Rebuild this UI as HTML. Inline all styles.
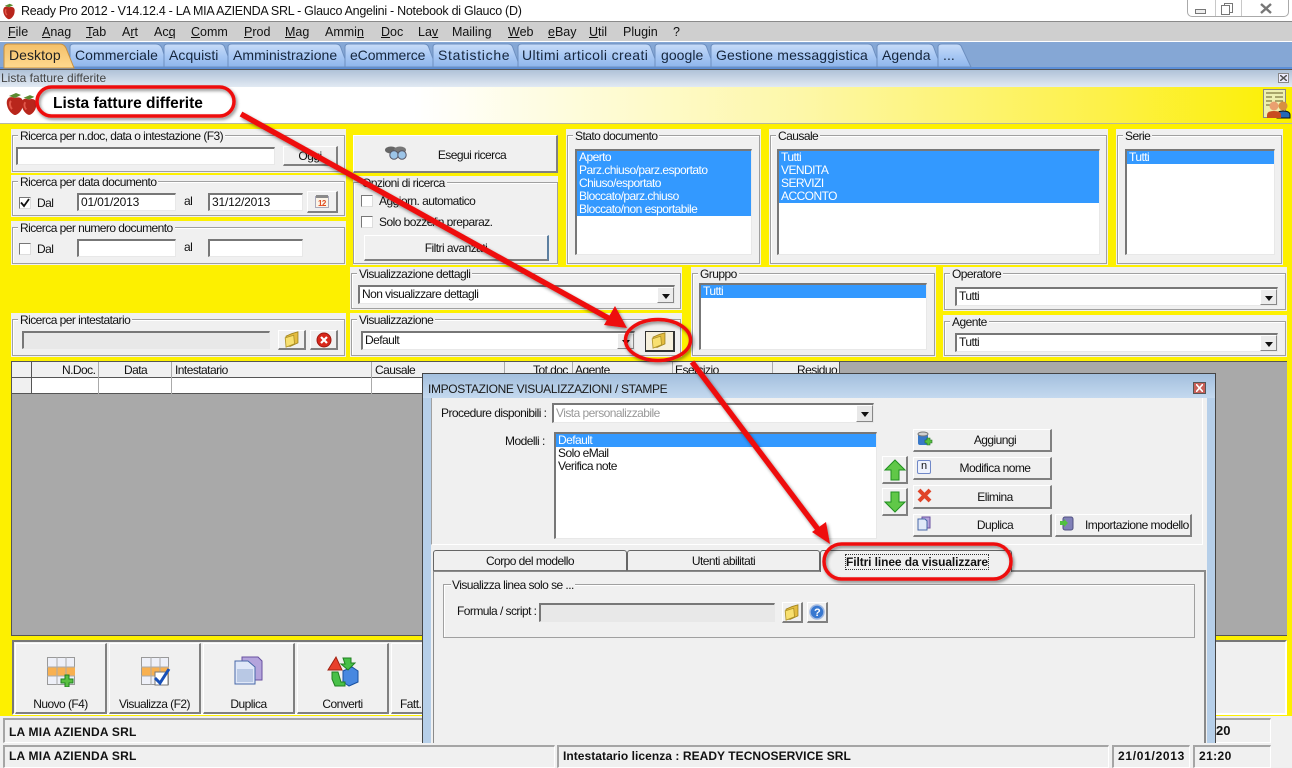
<!DOCTYPE html>
<html><head><meta charset="utf-8"><style>
html,body{margin:0;padding:0}
body{width:1292px;height:768px;overflow:hidden;position:relative;background:#f0f0f0;font:12px/14px "Liberation Sans",Arial,sans-serif;color:#111;letter-spacing:-.55px}
div,span,svg{position:absolute;box-sizing:border-box}
span{white-space:nowrap}
u{text-decoration:underline}
.m{top:25px;font-size:12.5px;letter-spacing:0}
.tt{top:48px;font-size:14px;color:#16263c;letter-spacing:.05px}
.p{background:#f0f0f0}
.g{left:1px;right:1px;top:6px;bottom:1px;border:1px solid #a0a0a0;box-shadow:inset 1px 1px 0 #fff}
.l{top:0;left:7px;background:#f0f0f0;padding:0 2px;font-size:12px}
.i{background:#fff;border:1px solid #9c9c9c;border-top:2px solid #777;border-left:2px solid #777;border-right-color:#e8e8e8;border-bottom-color:#e8e8e8;white-space:nowrap}
.b{background:#f0f0f0;border:1px solid #fff;border-right:2px solid #808080;border-bottom:2px solid #808080;text-align:center;white-space:nowrap}
.c{width:12px;height:12px;background:#fff;border:1px solid #777;border-right-color:#ddd;border-bottom-color:#ddd}
.s{background:#3399ff;color:#fff;left:0;right:0;height:13px;line-height:13px;padding-left:2px;font-size:12px}
.r{left:0;right:0;height:13px;line-height:13px;padding-left:2px;font-size:12px;color:#111}
.a{right:0;top:0;bottom:0;width:17px;background:#ececec;border:1px solid #fff;border-right:1px solid #888;border-bottom:1px solid #888}
.a:after{content:"";position:absolute;left:4px;top:6px;border:4px solid transparent;border-top:5px solid #111;border-bottom:0}
.st{background:#f0f0f0;border:1px solid #fff;border-top:2px solid #a5a5a5;border-left:2px solid #a5a5a5;font-weight:bold;font-size:12px;line-height:19px;padding-left:4px;letter-spacing:.22px;white-space:nowrap}
</style></head><body>
<svg width="0" height="0" style="position:absolute"><defs>
<symbol id="fo" viewBox="0 0 20 20"><path d="M3 6 L10 3 L17 1 L17 14 L8 18 L3 18Z" fill="#e4bc40" stroke="#a08420"/><path d="M2 8 L12 5 L13 15 L3 19Z" fill="#f8e070" stroke="#b09428"/></symbol>
<symbol id="sb" viewBox="0 0 20 24"><path d="M10 6 C3 3 1 8 2 13 C3 19 8 23 10 23 C13 23 18 18 18 12 C19 7 15 4 10 6Z" fill="#b8261c"/><path d="M6 9 C4 11 5 15 7 17" stroke="#e2584a" fill="none" stroke-width="2"/><path d="M4 4 L10 6 L16 3 L11 1Z" fill="#5a8a30"/></symbol>
</defs></svg>

<!-- title bar -->
<div style="left:0;top:0;width:1292px;height:22px;background:#fff;border-bottom:1px solid #8a8a8a"></div>
<svg style="left:2px;top:3px" width="14" height="17"><use href="#sb" width="14" height="17"/></svg>
<span style="left:21px;top:4px;font-size:12.5px;letter-spacing:-.28px">Ready Pro 2012 - V14.12.4 - LA MIA AZIENDA SRL - Glauco Angelini - Notebook di Glauco (D)</span>
<div style="left:1187px;top:-3px;width:102px;height:20px;background:#fff;border:1px solid #aaa;border-radius:0 0 5px 5px"></div>
<div style="left:1215px;top:0;width:1px;height:16px;background:#c8c8c8"></div>
<div style="left:1241px;top:0;width:1px;height:16px;background:#c8c8c8"></div>
<div style="left:1195px;top:9px;width:11px;height:5px;border:1px solid #777;background:#eee"></div>
<div style="left:1224px;top:3px;width:9px;height:10px;border:1.5px solid #777"></div><div style="left:1221px;top:5px;width:9px;height:10px;border:1.5px solid #777;background:#fff"></div>
<svg style="left:1260px;top:3px" width="12" height="11"><path d="M1 1L11 10M11 1L1 10" stroke="#777" stroke-width="2.4"/></svg>

<!-- menu -->
<div style="left:0;top:22px;width:1292px;height:19px;background:#cfcfcf"></div>
<div style="left:0;top:41px;width:1292px;height:1px;background:#fff"></div>
<span class="m" style="left:8px"><u>F</u>ile</span><span class="m" style="left:42px"><u>A</u>nag</span><span class="m" style="left:86px"><u>T</u>ab</span><span class="m" style="left:122px">A<u>r</u>t</span><span class="m" style="left:154px">Ac<u>q</u></span><span class="m" style="left:191px"><u>C</u>omm</span><span class="m" style="left:244px"><u>P</u>rod</span><span class="m" style="left:285px"><u>M</u>ag</span><span class="m" style="left:325px">Ammi<u>n</u></span><span class="m" style="left:381px"><u>D</u>oc</span><span class="m" style="left:418px">La<u>v</u></span><span class="m" style="left:452px">Mailin<u>g</u></span><span class="m" style="left:508px"><u>W</u>eb</span><span class="m" style="left:548px"><u>e</u>Bay</span><span class="m" style="left:589px"><u>U</u>til</span><span class="m" style="left:623px">Plu<u>g</u>in</span><span class="m" style="left:673px">?</span>

<!-- tabs -->
<div style="left:0;top:42px;width:1292px;height:25px;background:#85a7d5"></div>
<div style="left:0;top:67px;width:1292px;height:2px;background:#5c8fd8"></div>
<div style="left:0;top:69px;width:1292px;height:1px;background:#555"></div>
<svg style="left:0;top:42px" width="1000" height="27">
<defs><linearGradient id="tb" x1="0" y1="0" x2="0" y2="1"><stop offset="0" stop-color="#c8dcf8"/><stop offset=".5" stop-color="#a8c8f4"/><stop offset="1" stop-color="#8fb6ec"/></linearGradient>
<linearGradient id="to" x1="0" y1="0" x2="0" y2="1"><stop offset="0" stop-color="#f4c06a"/><stop offset="1" stop-color="#fdd88e"/></linearGradient></defs>
<g fill="url(#tb)" stroke="#6d8fc0">
<path d="M70 25V5Q70 2 74 2H156Q160 2 162 6L168 25Z"/>
<path d="M164 25V5Q164 2 168 2H220Q224 2 225 6L232 25Z"/>
<path d="M228 25V5Q228 2 232 2H336Q340 2 341 6L348 25Z"/>
<path d="M345 25V5Q345 2 349 2H424Q428 2 429 6L436 25Z"/>
<path d="M433 25V5Q433 2 437 2H508Q512 2 513 6L520 25Z"/>
<path d="M518 25V5Q518 2 522 2H646Q650 2 651 6L658 25Z"/>
<path d="M655 25V5Q655 2 659 2H702Q706 2 707 6L714 25Z"/>
<path d="M711 25V5Q711 2 715 2H868Q872 2 873 6L880 25Z"/>
<path d="M877 25V5Q877 2 881 2H929Q933 2 934 6L941 25Z"/>
<path d="M938 25V5Q938 2 942 2H957Q961 2 962 6L971 25Z"/>
</g>
<path d="M4 26V6Q4 2 8 2H60Q64 2 66 6L74 26Z" fill="url(#to)" stroke="#c89040"/>
</svg>
<span class="tt" style="left:9px;color:#222">Desktop</span><span class="tt" style="left:75px">Commerciale</span><span class="tt" style="left:169px">Acquisti</span><span class="tt" style="left:233px">Amministrazione</span><span class="tt" style="left:350px;letter-spacing:-.1px">eCommerce</span><span class="tt" style="left:438px;letter-spacing:.7px">Statistiche</span><span class="tt" style="left:522px;letter-spacing:.4px">Ultimi articoli creati</span><span class="tt" style="left:661px">google</span><span class="tt" style="left:716px;letter-spacing:.15px">Gestione messaggistica</span><span class="tt" style="left:882px">Agenda</span><span class="tt" style="left:943px">...</span>

<!-- subtitle -->
<div style="left:0;top:70px;width:1292px;height:17px;background:linear-gradient(#b0c2d8,#e2eaf3)"></div>
<span style="left:1px;top:71px;font-size:12px;letter-spacing:0;color:#444">Lista fatture differite</span>
<div style="left:1278px;top:73px;width:11px;height:10px;border:1px solid #888;background:#eef"></div>
<svg style="left:1280px;top:75px" width="7" height="6"><path d="M0 0L7 6M7 0L0 6" stroke="#555" stroke-width="1.5"/></svg>

<!-- header -->
<div style="left:0;top:87px;width:1292px;height:36px;background:linear-gradient(90deg,#fff 0,#fff 32%,#fdf7a8 62%,#fdf14a 85%,#fcf000 100%)"></div>
<div style="left:0;top:123px;width:1292px;height:1px;background:#b8b8a0"></div>
<svg style="left:5px;top:92px" width="20" height="24"><use href="#sb" width="20" height="24"/></svg>
<svg style="left:20px;top:94px" width="18" height="22"><use href="#sb" width="18" height="22"/></svg>
<span style="left:53px;top:95px;font-size:15.5px;line-height:17px;font-weight:bold;color:#000;letter-spacing:0">Lista fatture differite</span>
<svg style="left:1263px;top:89px" width="28" height="31"><rect x=".5" y=".5" width="22" height="28" fill="#eef0b0" stroke="#888"/><path d="M3 4H20M3 8H9M3 12H9M3 16H8M12 8H20M12 12H20" stroke="#807a40" stroke-width="1.3"/><circle cx="20" cy="17" r="4.5" fill="#d89040"/><path d="M14 29V26Q14 22 20 22Q27 22 27 26V29Z" fill="#2468b8" stroke="#111"/><circle cx="11" cy="17" r="4.5" fill="#eaa070"/><path d="M4 29V26Q4 22 11 22Q18 22 18 26V29Z" fill="#c84c20"/></svg>

<!-- yellow -->
<div style="left:0;top:124px;width:1292px;height:592px;background:#fdf000"></div>

<!-- left panels -->
<div class="p" style="left:11px;top:129px;width:335px;height:44px"><div class="g"></div><span class="l">Ricerca per n.doc, data o intestazione (F3)</span></div>
<div class="i" style="left:16px;top:147px;width:259px;height:18px"></div>
<div class="b" style="left:283px;top:146px;width:55px;height:20px;line-height:18px">Oggi</div>

<div class="p" style="left:11px;top:175px;width:335px;height:42px"><div class="g"></div><span class="l">Ricerca per data documento</span></div>
<div class="c" style="left:19px;top:197px"></div>
<svg style="left:20px;top:198px" width="10" height="10"><path d="M1 4.5L4 8L9 1" stroke="#111" stroke-width="1.8" fill="none"/></svg>
<span style="left:37px;top:196px">Dal</span>
<div class="i" style="left:77px;top:193px;width:99px;height:18px;line-height:14px;padding-left:2px;letter-spacing:-.2px">01/01/2013</div>
<span style="left:184px;top:194px">al</span>
<div class="i" style="left:208px;top:193px;width:95px;height:18px;line-height:14px;padding-left:2px;letter-spacing:-.2px">31/12/2013</div>
<div class="b" style="left:307px;top:191px;width:31px;height:22px"></div>
<svg style="left:315px;top:194px" width="15" height="15"><rect x=".5" y="2.5" width="13" height="11" fill="#fbf4e8" stroke="#aab"/><rect x="1" y="1" width="12" height="3" fill="#8a8a8a"/><text x="3" y="12" font-size="8" font-weight="bold" fill="#e04a20" font-family="Liberation Sans">12</text></svg>

<div class="p" style="left:11px;top:221px;width:335px;height:44px"><div class="g"></div><span class="l">Ricerca per numero documento</span></div>
<div class="c" style="left:19px;top:243px"></div>
<span style="left:37px;top:242px">Dal</span>
<div class="i" style="left:77px;top:239px;width:99px;height:18px"></div>
<span style="left:184px;top:240px">al</span>
<div class="i" style="left:208px;top:239px;width:95px;height:18px"></div>

<div class="p" style="left:11px;top:313px;width:335px;height:44px"><div class="g"></div><span class="l">Ricerca per intestatario</span></div>
<div class="i" style="left:22px;top:331px;width:248px;height:18px;background:#e8e8e8"></div>
<div class="b" style="left:278px;top:330px;width:28px;height:20px"></div>
<svg style="left:283px;top:331px" width="18" height="17"><use href="#fo" width="18" height="17"/></svg>
<div class="b" style="left:310px;top:330px;width:28px;height:20px"></div>
<svg style="left:316px;top:332px" width="16" height="16"><circle cx="8" cy="8" r="7" fill="#d8281c" stroke="#a01810"/><path d="M5 5L11 11M11 5L5 11" stroke="#fff" stroke-width="2.2"/></svg>

<!-- center panels -->
<div class="b" style="left:353px;top:135px;width:205px;height:38px;line-height:38px;padding-left:34px">Esegui ricerca</div>
<svg style="left:384px;top:145px" width="24" height="16"><ellipse cx="7" cy="5" rx="6" ry="3.5" fill="#666"/><ellipse cx="16" cy="5" rx="6" ry="3.5" fill="#777"/><circle cx="10" cy="10" r="4.2" fill="#9cc4e8" stroke="#556"/><circle cx="18" cy="10" r="4.2" fill="#9cc4e8" stroke="#556"/></svg>

<div class="p" style="left:353px;top:176px;width:205px;height:89px"><div class="g" style="left:0;right:0"></div><span class="l">Opzioni di ricerca</span></div>
<div class="c" style="left:361px;top:195px"></div><span style="left:379px;top:194px">Aggiorn. automatico</span>
<div class="c" style="left:361px;top:216px"></div><span style="left:379px;top:215px">Solo bozze/in preparaz.</span>
<div class="b" style="left:364px;top:235px;width:185px;height:26px;line-height:24px;border-right-color:#5c7fa0">Filtri avanzati</div>

<div class="p" style="left:350px;top:267px;width:332px;height:43px"><div class="g"></div><span class="l">Visualizzazione dettagli</span></div>
<div class="i" style="left:358px;top:285px;width:317px;height:19px;line-height:15px;padding-left:2px">Non visualizzare dettagli<div class="a"></div></div>

<div class="p" style="left:350px;top:313px;width:332px;height:44px"><div class="g"></div><span class="l">Visualizzazione</span></div>
<div class="i" style="left:361px;top:331px;width:274px;height:19px;line-height:15px;padding-left:2px">Default<div class="a"></div></div>
<div class="b" style="left:645px;top:331px;width:30px;height:21px;border:1px solid #333;border-right:2px solid #333;border-bottom:2px solid #333;background:#f6f0dc"></div>
<svg style="left:650px;top:332px" width="18" height="17"><use href="#fo" width="18" height="17"/></svg>

<!-- lists -->
<div class="p" style="left:566px;top:129px;width:195px;height:136px"><div class="g"></div><span class="l">Stato documento</span></div>
<div class="i" style="left:575px;top:149px;width:177px;height:106px"><div class="s" style="top:0">Aperto</div><div class="s" style="top:13px">Parz.chiuso/parz.esportato</div><div class="s" style="top:26px">Chiuso/esportato</div><div class="s" style="top:39px">Bloccato/parz.chiuso</div><div class="s" style="top:52px">Bloccato/non esportabile</div></div>

<div class="p" style="left:769px;top:129px;width:339px;height:136px"><div class="g"></div><span class="l">Causale</span></div>
<div class="i" style="left:777px;top:149px;width:323px;height:106px"><div class="s" style="top:0">Tutti</div><div class="s" style="top:13px">VENDITA</div><div class="s" style="top:26px">SERVIZI</div><div class="s" style="top:39px">ACCONTO</div></div>

<div class="p" style="left:1116px;top:129px;width:167px;height:136px"><div class="g"></div><span class="l">Serie</span></div>
<div class="i" style="left:1125px;top:149px;width:150px;height:106px"><div class="s" style="top:0">Tutti</div></div>

<div class="p" style="left:691px;top:267px;width:245px;height:90px"><div class="g"></div><span class="l">Gruppo</span></div>
<div class="i" style="left:699px;top:283px;width:228px;height:67px"><div class="s" style="top:0">Tutti</div></div>

<div class="p" style="left:943px;top:267px;width:344px;height:44px"><div class="g"></div><span class="l">Operatore</span></div>
<div class="i" style="left:955px;top:287px;width:323px;height:19px;line-height:15px;padding-left:2px">Tutti<div class="a"></div></div>

<div class="p" style="left:943px;top:315px;width:344px;height:42px"><div class="g"></div><span class="l">Agente</span></div>
<div class="i" style="left:955px;top:333px;width:323px;height:19px;line-height:15px;padding-left:2px">Tutti<div class="a"></div></div>

<!-- grid -->
<div style="left:11px;top:361px;width:1276px;height:275px;background:#a9a9a9;border:1px solid #555;border-right:0"></div>
<div style="left:12px;top:362px;width:828px;height:16px;background:#f0f0f0;border-bottom:1px solid #555"></div>
<div style="left:12px;top:378px;width:828px;height:16px;background:#fff;border-bottom:1px solid #555"></div>
<div style="left:12px;top:378px;width:20px;height:16px;background:#f0f0f0;border-bottom:1px solid #555"></div>
<div style="left:31px;top:362px;width:1px;height:32px;background:#555"></div>
<div style="left:98px;top:362px;width:1px;height:32px;background:#aaa"></div>
<div style="left:171px;top:362px;width:1px;height:32px;background:#aaa"></div>
<div style="left:371px;top:362px;width:1px;height:32px;background:#aaa"></div>
<div style="left:504px;top:362px;width:1px;height:32px;background:#aaa"></div>
<div style="left:572px;top:362px;width:1px;height:32px;background:#aaa"></div>
<div style="left:672px;top:362px;width:1px;height:32px;background:#aaa"></div>
<div style="left:772px;top:362px;width:1px;height:32px;background:#aaa"></div>
<div style="left:839px;top:362px;width:1px;height:32px;background:#555"></div>
<span style="left:62px;top:363px">N.Doc.</span><span style="left:124px;top:363px">Data</span><span style="left:175px;top:363px">Intestatario</span><span style="left:375px;top:363px">Causale</span><span style="left:533px;top:363px">Tot.doc</span><span style="left:575px;top:363px">Agente</span><span style="left:675px;top:363px">Esercizio</span><span style="left:797px;top:363px">Residuo</span>

<!-- bottom buttons -->
<div style="left:12px;top:640px;width:1275px;height:75px;background:#f0f0f0;border-top:2px solid #777;border-left:2px solid #777;border-right:2px solid #fff;border-bottom:2px solid #fff"></div>
<div class="b" style="left:15px;top:643px;width:92px;height:71px;line-height:14px"><span style="left:0;right:0;top:53px;text-align:center">Nuovo (F4)</span></div>
<div class="b" style="left:109px;top:643px;width:92px;height:71px"><span style="left:0;right:0;top:53px;text-align:center">Visualizza (F2)</span></div>
<div class="b" style="left:203px;top:643px;width:92px;height:71px"><span style="left:0;right:0;top:53px;text-align:center">Duplica</span></div>
<div class="b" style="left:297px;top:643px;width:92px;height:71px"><span style="left:0;right:0;top:53px;text-align:center">Converti</span></div>
<div class="b" style="left:391px;top:643px;width:60px;height:71px"><span style="left:8px;top:53px">Fatt.</span></div>
<svg style="left:47px;top:657px" width="30" height="30"><rect x=".5" y=".5" width="27" height="27" fill="#eef0f8" stroke="#999"/><rect x="1" y="10" width="27" height="9" fill="#f8b050"/><path d="M10 0V28M19 0V28M0 10H28M0 19H28" stroke="#aaa"/><path d="M18 18h4v4h4v4h-4v4h-4v-4h-4v-4h4z" fill="#58c040" stroke="#208020"/></svg>
<svg style="left:141px;top:657px" width="30" height="30"><rect x=".5" y=".5" width="27" height="27" fill="#eef0f8" stroke="#999"/><rect x="1" y="10" width="27" height="9" fill="#f8b050"/><path d="M10 0V28M19 0V28M0 10H28M0 19H28" stroke="#aaa"/><rect x="14" y="15" width="13" height="13" fill="#fff" stroke="#777"/><path d="M14 21L19 26L28 12" stroke="#1850b8" stroke-width="3" fill="none"/></svg>
<svg style="left:234px;top:656px" width="30" height="30"><path d="M8 1H24L28 5V24H8Z" fill="#b4a4dc" stroke="#6850a0"/><path d="M1 5H14L21 11V28H1Z" fill="#e0e8f8" stroke="#4868a8"/><rect x="3" y="13" width="16" height="13" fill="#b8c8e4"/></svg>
<svg style="left:327px;top:655px" width="32" height="32"><path d="M1 15L9 2L15 15Z" fill="#e8402c" stroke="#a02010"/><path d="M16 16L25 12L31 16V27L22 31L16 27Z" fill="#4888e0" stroke="#1850a0"/><path d="M16 3H24V8L28 8L21 15L14 9H18Z" fill="#48c048" stroke="#208020"/><path d="M5 17H11L14 27H18V31H8L5 24Z" fill="#48c048" stroke="#208020"/></svg>

<!-- status bars -->
<div style="left:1216px;top:715px;width:76px;height:1px;background:#fdf000"></div>
<div style="left:0;top:716px;width:1292px;height:52px;background:#f0f0f0"></div>
<div class="st" style="left:3px;top:718px;width:1268px;height:25px;line-height:24px">LA MIA AZIENDA SRL</div>
<span style="left:1216px;top:724px;font-weight:bold;font-size:13px;letter-spacing:0;z-index:5">20</span>
<div class="st" style="left:3px;top:745px;width:552px;height:23px">LA MIA AZIENDA SRL</div>
<div class="st" style="left:557px;top:745px;width:552px;height:23px;letter-spacing:.05px">Intestatario licenza : READY TECNOSERVICE SRL</div>
<div class="st" style="left:1112px;top:745px;width:78px;height:23px;letter-spacing:.7px">21/01/2013</div>
<div class="st" style="left:1193px;top:745px;width:78px;height:23px;letter-spacing:.4px">21:20</div>

<!-- dialog -->
<div style="left:422px;top:373px;width:794px;height:370px;background:#b6cfe9;border:1px solid #444;border-bottom:0;z-index:3">
<div style="left:0;top:0;right:0;height:24px;background:linear-gradient(#a3bfdd,#c4d9ef)"></div>
<span style="left:5px;top:8px;font-size:12px;color:#1a1a1a;letter-spacing:-.35px">IMPOSTAZIONE VISUALIZZAZIONI / STAMPE</span>
<div style="left:770px;top:8px;width:13px;height:12px;background:#c86058;border:1px solid #555"></div>
<svg style="left:773px;top:10px" width="7" height="8"><path d="M0 0L7 8M7 0L0 8" stroke="#fff" stroke-width="1.6"/></svg>
<div style="left:8px;top:24px;width:776px;height:346px;background:#f0f0f0"></div>
<div style="left:8px;top:24px;width:772px;height:147px;border:1px solid #a0a0a0;border-top:0;border-right-color:#fff;border-bottom-color:#fff"></div>
</div>
<div style="left:0;top:0;width:1292px;height:768px;z-index:4">
<span style="left:441px;top:406px">Procedure disponibili :</span>
<div class="i" style="left:552px;top:403px;width:322px;height:20px;line-height:16px;padding-left:2px;color:#999">Vista personalizzabile<div class="a" style="background:#e8e8e8"></div></div>
<span style="left:505px;top:434px">Modelli :</span>
<div class="i" style="left:554px;top:432px;width:323px;height:107px"><div class="s" style="top:0">Default</div><div class="r" style="top:13px">Solo eMail</div><div class="r" style="top:26px">Verifica note</div></div>

<div class="b" style="left:882px;top:456px;width:26px;height:28px"></div>
<svg style="left:884px;top:459px" width="22" height="22"><path d="M11 1L21 11H15V21H7V11H1Z" fill="#60c848" stroke="#209020"/></svg>
<div class="b" style="left:882px;top:488px;width:26px;height:28px"></div>
<svg style="left:884px;top:491px" width="22" height="22"><path d="M7 1H15V11H21L11 21L1 11H7Z" fill="#60c848" stroke="#209020"/></svg>

<div class="b" style="left:913px;top:429px;width:139px;height:23px;line-height:21px;padding-left:26px">Aggiungi</div>
<svg style="left:917px;top:431px" width="16" height="16"><rect x="1" y="2" width="10" height="12" rx="2" fill="#3878c8"/><ellipse cx="6" cy="3" rx="5" ry="2" fill="#d0d0d0" stroke="#777"/><path d="M10 7h3v2h2v3h-2v2h-3v-2H8V9h2z" fill="#58c040" stroke="#207020" stroke-width=".6"/></svg>
<div class="b" style="left:913px;top:457px;width:139px;height:23px;line-height:21px;padding-left:26px">Modifica nome</div>
<div style="left:917px;top:460px;width:14px;height:14px;background:#eef2fc;border:1px solid #7088c8;font-size:11px;line-height:11px;text-align:center;border-radius:2px;letter-spacing:0">n</div>
<div class="b" style="left:913px;top:485px;width:139px;height:24px;line-height:22px;padding-left:26px">Elimina</div>
<svg style="left:917px;top:488px" width="15" height="15"><path d="M2 2L13 13M13 2L2 13" stroke="#e04428" stroke-width="4"/></svg>
<div class="b" style="left:913px;top:514px;width:139px;height:23px;line-height:21px;padding-left:26px">Duplica</div>
<svg style="left:917px;top:516px" width="15" height="15"><path d="M5 1H13V12H5Z" fill="#b4a4dc" stroke="#6850a0"/><path d="M1 3H8L10 5V14H1Z" fill="#e0e8f8" stroke="#4868a8"/></svg>
<div class="b" style="left:1055px;top:514px;width:137px;height:23px;line-height:21px;padding-left:29px;text-align:left">Importazione modello</div>
<svg style="left:1059px;top:516px" width="15" height="15"><rect x="4" y="1" width="10" height="13" rx="2" fill="#8080b8" stroke="#505080"/><path d="M1 5H5V3L9 7L5 11V9H1Z" fill="#50c040"/></svg>

<div style="left:433px;top:570px;width:773px;height:173px;border:2px solid #8a8a8a;border-bottom:0;border-left-width:1px"></div>
<div style="left:433px;top:550px;width:194px;height:21px;background:#f0f0f0;border:1px solid #666;border-bottom:1px solid #777;border-radius:3px 3px 0 0;text-align:center;line-height:20px">Corpo del modello</div>
<div style="left:627px;top:550px;width:193px;height:21px;background:#f0f0f0;border:1px solid #666;border-bottom:1px solid #777;border-radius:3px 3px 0 0;text-align:center;line-height:20px">Utenti abilitati</div>
<div style="left:820px;top:550px;width:192px;height:22px;background:#f0f0f0;border:1px solid #666;border-bottom:0;border-radius:3px 3px 0 0"></div>
<span style="left:846px;top:555px;font-weight:bold;letter-spacing:-.1px;outline:1px dotted #333">Filtri linee da visualizzare</span>

<div style="left:443px;top:584px;width:752px;height:54px;border:1px solid #a0a0a0;box-shadow:inset 1px 1px 0 #fff"></div>
<span style="left:451px;top:578px;background:#f0f0f0;padding:0 1px">Visualizza linea solo se ...</span>
<span style="left:457px;top:604px">Formula / script :</span>
<div class="i" style="left:539px;top:603px;width:236px;height:19px;background:#e8e8e8"></div>
<div class="b" style="left:782px;top:602px;width:21px;height:21px"></div>
<svg style="left:783px;top:604px" width="18" height="17"><use href="#fo" width="18" height="17"/></svg>
<div class="b" style="left:807px;top:602px;width:21px;height:21px"></div>
<svg style="left:809px;top:604px" width="16" height="16"><circle cx="8" cy="8" r="7" fill="#3878d0" stroke="#a0b8e0" stroke-width="1.5"/><text x="5" y="12" font-size="11" font-weight="bold" fill="#fff" font-family="Liberation Sans">?</text></svg>
</div>

<!-- annotations -->
<svg style="left:0;top:0;z-index:6" width="1292" height="768">
<defs><filter id="sh" x="-20%" y="-20%" width="140%" height="140%"><feDropShadow dx="1.5" dy="2" stdDeviation="1.5" flood-color="#000" flood-opacity=".45"/></filter></defs>
<g filter="url(#sh)" fill="none" stroke="#ee1111" stroke-width="3.5">
<rect x="37" y="87" width="197" height="29" rx="14.5"/>
<ellipse cx="658" cy="340" rx="32.5" ry="20.5"/>
<rect x="824" y="544" width="187" height="35" rx="17.5"/>
<path d="M241 114L610 319" stroke-width="5.5"/>
<path d="M692 362L820 532" stroke-width="5.5"/>
<path d="M627 328L604 325L615 306Z" fill="#ee1111" stroke="none"/>
<path d="M830 544L812 532L826 522Z" fill="#ee1111" stroke="none"/>
</g>
</svg>
</body></html>
